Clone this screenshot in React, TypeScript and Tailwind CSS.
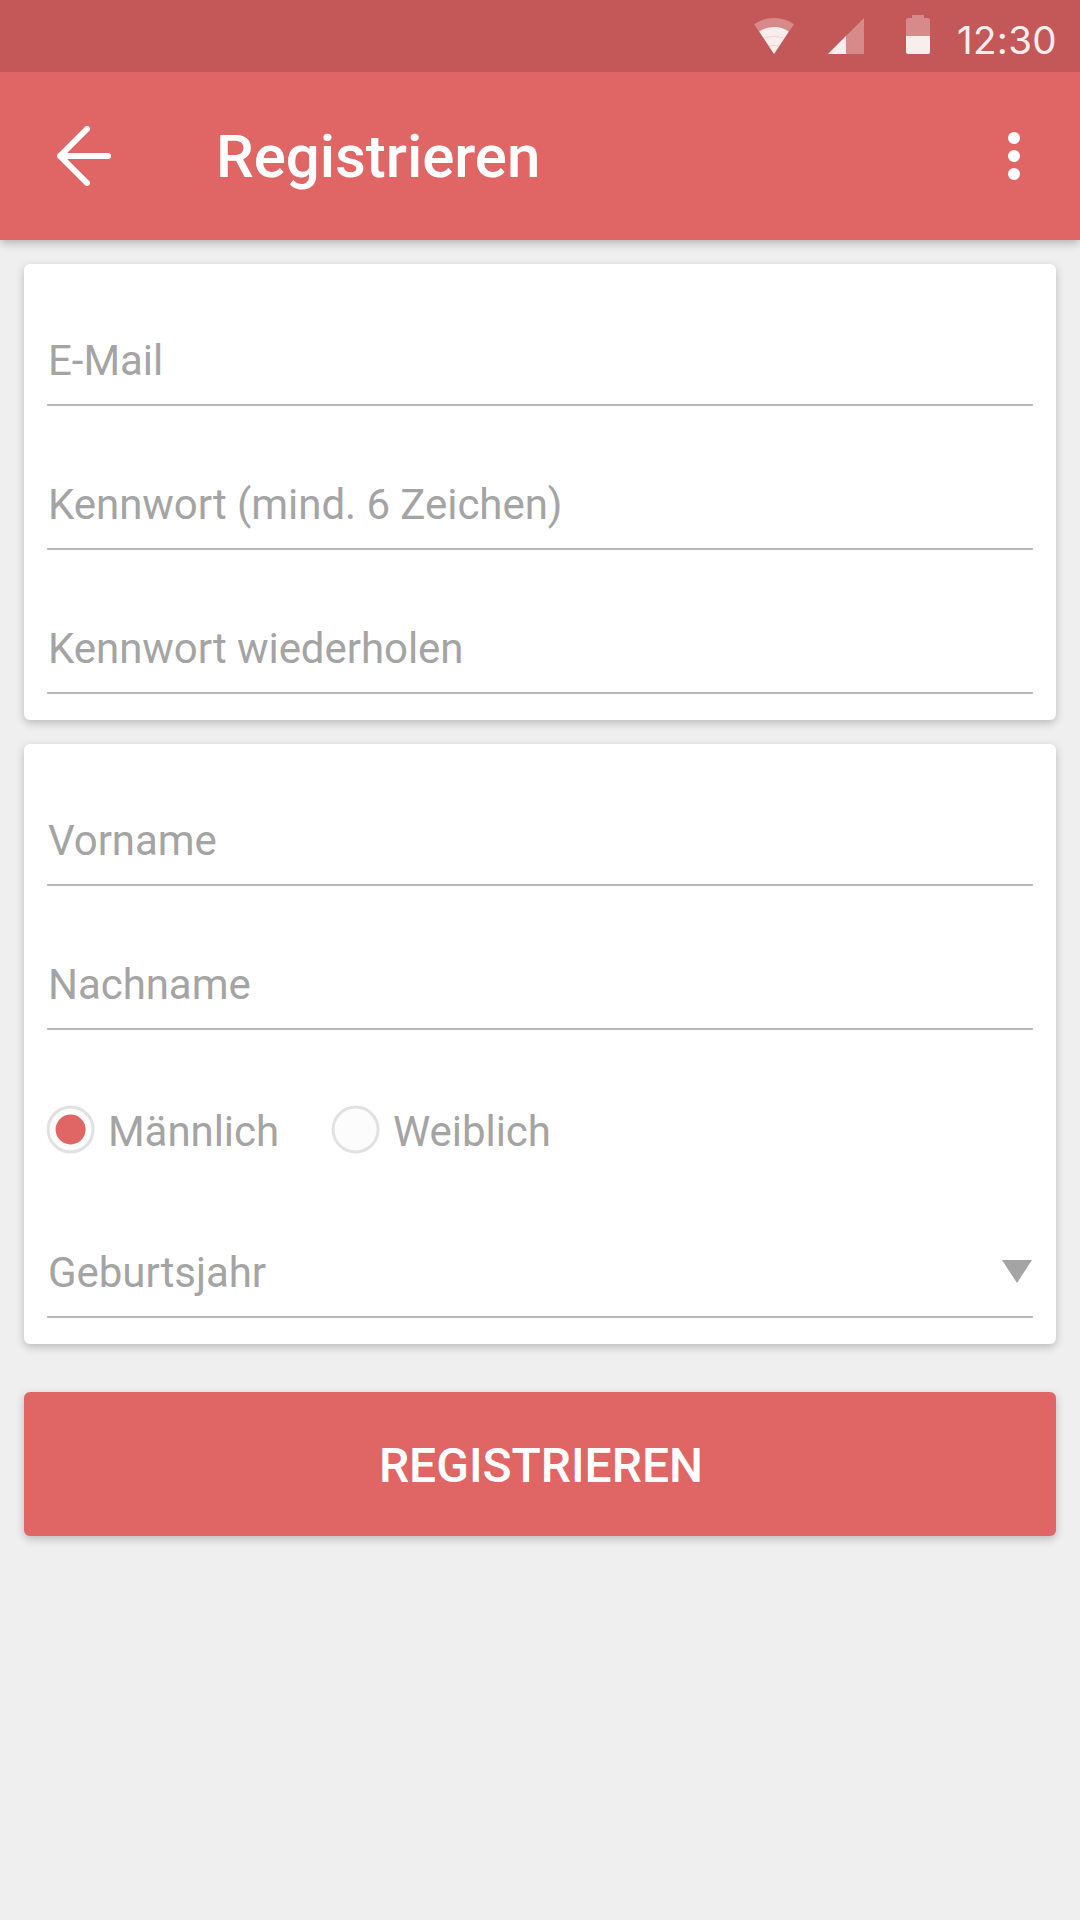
import React from 'react';

function StatusBar() {
  return (
    <div className="flex h-[72px] items-start justify-end bg-[#c45858]">
      <svg className="mt-[18px] h-9 w-10" viewBox="0 0 40 36" fill="#fff">
        <path d="M0 6.2Q9 0 20 0T40 6.2L20 36Z" fillOpacity=".3" />
        <path d="M5.3 13.4Q12 9 20 9T34.7 13.4L20 36Z" fillOpacity=".86" />
        <path d="M11 19.6Q20 17 29 19.6M15 28.2Q20 26.6 25 28.2" fill="none" stroke="#c45858" strokeOpacity=".25" strokeWidth=".8" />
      </svg>
      <svg className="ml-[34px] mt-[18px] size-9" viewBox="0 0 36 36" fill="#fff">
        <path d="M0 36 36 0V36Z" fillOpacity=".3" />
        <path d="M0 36 18 18V36Z" fillOpacity=".85" />
      </svg>
      <svg className="ml-[42px] mt-[15px] h-[39px] w-6" viewBox="0 0 24 39" fill="#fff">
        <path d="M6 0H18V3H22A2 2 0 0 1 24 5V21H0V5A2 2 0 0 1 2 3H6Z" fillOpacity=".3" />
        <path d="M0 21H24V37A2 2 0 0 1 22 39H2A2 2 0 0 1 0 37Z" fillOpacity=".9" />
      </svg>
      <span className="ml-[27px] mr-[23px] mt-5 w-[100px] whitespace-nowrap font-['Inter'] text-[38.5px] font-normal leading-10 tracking-[0.3px] text-[#f9eeee]">12:30</span>
    </div>
  );
}

function AppBar() {
  return (
    <header className="relative z-10 bg-[#e06666] shadow-[0_3px_9px_rgba(0,0,0,0.25)]">
      <StatusBar />
      <div className="flex h-[168px] items-center pl-[57px] pr-[60px]">
        <button aria-label="Zurück">
          <svg className="h-[60px] w-[54px]" viewBox="0 0 54 60" fill="none" stroke="#fff" strokeWidth="6" strokeLinecap="round" strokeLinejoin="round">
            <path d="M30 3 3 30 30 57M3 30H51" />
          </svg>
        </button>
        <h1 className="ml-[105px] grow pt-0.5 text-[60px] font-medium leading-[70px] tracking-[-0.05px]">Registrieren</h1>
        <button aria-label="Menü" className="flex flex-col gap-1.5">
          <span className="size-3 rounded-full bg-white" />
          <span className="size-3 rounded-full bg-white" />
          <span className="size-3 rounded-full bg-white" />
        </button>
      </div>
    </header>
  );
}

function Field({ label, children }: { label: string; children?: React.ReactNode }) {
  return (
    <div className="flex h-[72px] items-start justify-between border-b-2 border-[#b8b8b8] pl-px">
      <span className="leading-[54px]">{label}</span>
      {children}
    </div>
  );
}

function Radio({ label, checked }: { label: string; checked?: boolean }) {
  return (
    <label className="flex items-center gap-[13px]">
      <svg className="size-12 overflow-visible" viewBox="0 0 48 48">
        <circle cx="23.6" cy="23.5" r="22.5" fill="#fcfcfc" stroke="#e1e1e1" strokeWidth="3" />
        {checked && <circle cx="23.6" cy="23.5" r="15" fill="#e06666" />}
      </svg>
      <span className="mt-1 leading-[52px]">{label}</span>
    </label>
  );
}

function Card({ children }: { children: React.ReactNode }) {
  return (
    <section className="flex flex-col rounded-md bg-white px-[23px] pb-[26px] pt-[70px] text-[42px] tracking-[-0.05px] text-[#a4a4a4] shadow-[0_3px_9px_rgba(0,0,0,0.22)]">
      {children}
    </section>
  );
}

export default function App() {
  return (
    <div className="h-[1920px] w-[1080px] bg-[#efefef] font-['Roboto',sans-serif] text-white">
      <AppBar />
      <main className="flex flex-col gap-6 p-6">
        <Card>
          <div className="flex flex-col gap-[72px]">
            <Field label="E-Mail" />
            <Field label="Kennwort (mind. 6 Zeichen)" />
            <Field label="Kennwort wiederholen" />
          </div>
        </Card>
        <Card>
          <div className="flex flex-col gap-[72px]">
            <Field label="Vorname" />
            <Field label="Nachname" />
          </div>
          <div className="flex h-[216px] items-center pb-4">
            <div className="w-[285px]"><Radio label="Männlich" checked /></div>
            <Radio label="Weiblich" />
          </div>
          <Field label="Geburtsjahr">
            <svg className="mr-px mt-3.5 h-[23px] w-[30px]" viewBox="0 0 30 23">
              <path d="M0 0H30L15 23Z" fill="#a4a4a4" />
            </svg>
          </Field>
        </Card>
        <button className="mt-6 h-36 rounded-md bg-[#e06666] pl-0.5 pt-1 text-[48px] font-medium shadow-[0_3px_9px_rgba(0,0,0,0.22)]">
          REGISTRIEREN
        </button>
      </main>
    </div>
  );
}
